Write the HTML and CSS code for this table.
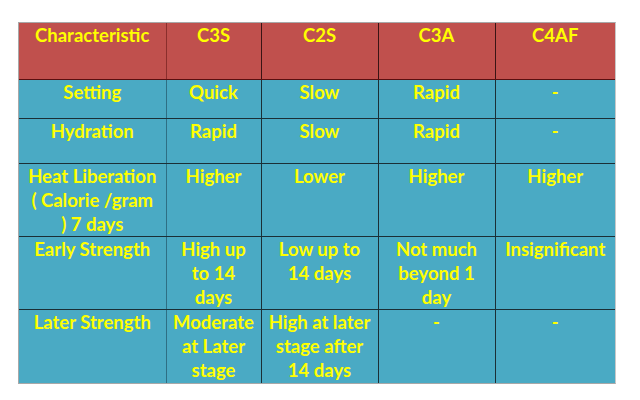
FILE: index.html
```html
<!DOCTYPE html>
<html>
<head>
<meta charset="utf-8">
<link rel="stylesheet" href="styles.css">
</head>
<body>
<div class="frame">
<table class="tbl">
<colgroup>
<col class="c1"><col class="c2"><col class="c3"><col class="c4"><col class="c5">
</colgroup>
<tr class="head r0"><td class="first">Characteristic</td><td>C3S</td><td>C2S</td><td>C3A</td><td>C4AF</td></tr>
<tr class="r1"><td class="first">Setting</td><td>Quick</td><td>Slow</td><td>Rapid</td><td>-</td></tr>
<tr class="r2"><td class="first">Hydration</td><td>Rapid</td><td>Slow</td><td>Rapid</td><td>-</td></tr>
<tr class="r3"><td class="first">Heat Liberation<br>( Calorie /gram<br>) 7 days</td><td>Higher</td><td>Lower</td><td>Higher</td><td>Higher</td></tr>
<tr class="r4"><td class="first">Early Strength</td><td>High up<br>to 14<br>days</td><td>Low up to<br>14 days</td><td>Not much<br>beyond 1<br>day</td><td>Insignificant</td></tr>
<tr class="r5"><td class="first">Later Strength</td><td>Moderate<br>at Later<br>stage</td><td>High at later<br>stage after<br>14 days</td><td>-</td><td>-</td></tr>
</table>
</div>
</body>
</html>
```
FILE: styles.css
```css
html, body { margin: 0; background: #ffffff; }
body { padding: 22px 0 0 18px; }
.frame {
  display: inline-block;
  border-top: 1px solid #a8a8a8;
  border-left: 1px solid #a8a8a8;
  border-bottom: 1px solid #a8a8a8;
  border-right: 1px solid #c8c8c8;
}
.tbl {
  border-collapse: collapse;
  table-layout: fixed;
  width: 596px;
  font-family: Lato, "Liberation Sans", sans-serif;
  font-weight: bold;
  font-size: 18.5px;
  line-height: 24px;
  color: #ffff00;
}
.c1 { width: 147px; }
.c2 { width: 95px; }
.c3 { width: 117px; }
.c4 { width: 117px; }
.c5 { width: 120px; }
.tbl td {
  background: #4aaac4;
  border: 1px solid #1b2f36;
  text-align: center;
  vertical-align: top;
  padding: 0;
  white-space: nowrap;
  overflow: hidden;
}
.tbl tr:first-child td { border-top: none; }
.tbl td:first-child { border-left: none; }
.tbl td:last-child { border-right: none; }
.tbl tr:last-child td { border-bottom: none; }
.tbl td.first { border-right-color: #2e6f84; }
.head td {
  background: #c0504d;
  border-bottom-color: #5a0f10;
  border-right-color: #3a1414;
}
.head td.first { border-right-color: #8a2e2c; }
.r0 { height: 56px; }
.r1 { height: 39px; }
.r2 { height: 45px; }
.r3 { height: 73px; }
.r4 { height: 73px; }
.r5 { height: 74px; }
```
